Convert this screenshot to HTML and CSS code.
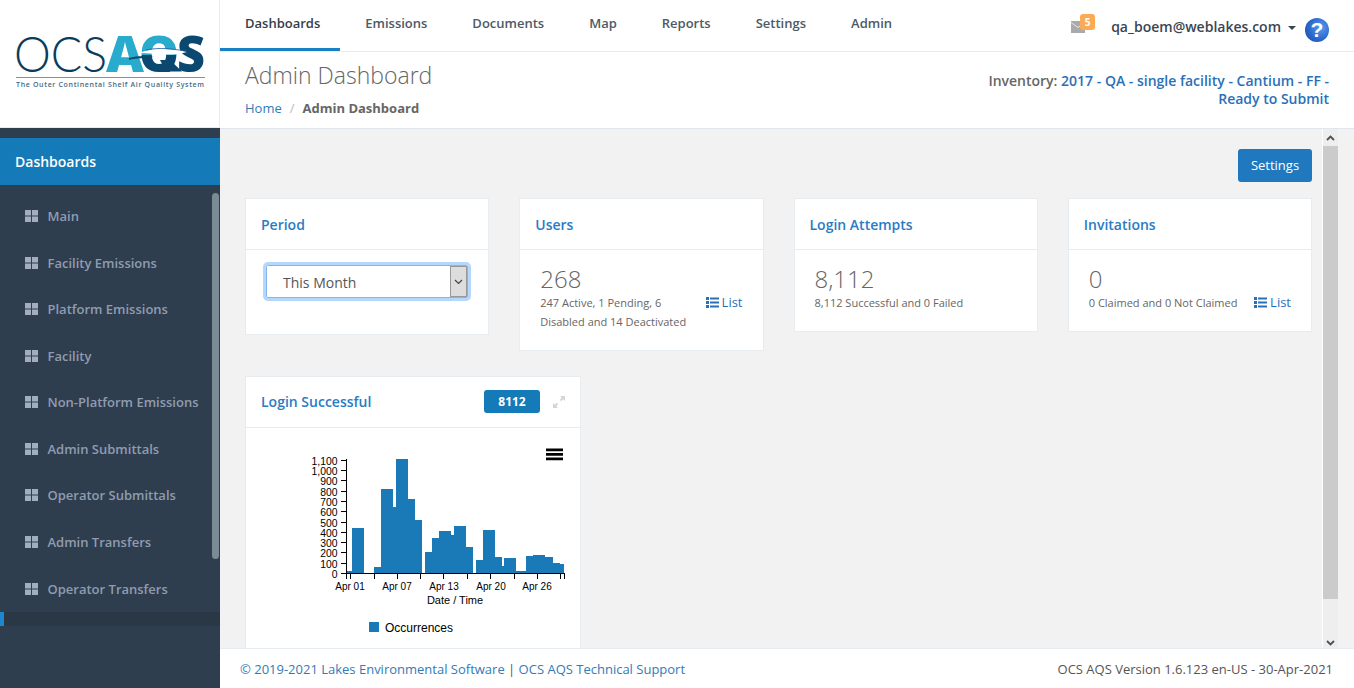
FILE: index.html
```html
<!DOCTYPE html>
<html>
<head>
	<title>OCS AQS - Admin Dashboard</title>
	<meta charset="utf-8">
	<link rel="stylesheet" href="styles.css">
</head>
<body>
<div class="page">
	<aside class="sidebar">
		<div class="logo">
			<svg width="219" height="127" viewBox="0 0 219 127">
				<defs>
					<linearGradient id="qfill" gradientUnits="userSpaceOnUse" x1="0" y1="0" x2="0" y2="127">
						<stop offset="0.43" stop-color="#29abce"/>
						<stop offset="0.43" stop-color="#0a4870"/>
					</linearGradient>
					<clipPath id="qcut"><rect x="130" y="20" width="60" height="52"/></clipPath>
				</defs>
				<text x="14" y="71.500" class="logo-thin" textLength="93" lengthAdjust="spacingAndGlyphs">OCS</text>
				<text x="106" y="71.500" class="logo-bold logo-a" textLength="38" lengthAdjust="spacingAndGlyphs">A</text>
				<text x="139" y="71.500" class="logo-bold logo-q" textLength="40" lengthAdjust="spacingAndGlyphs" clip-path="url(#qcut)">Q</text>
				<text x="177" y="71.500" class="logo-bold logo-s" textLength="28" lengthAdjust="spacingAndGlyphs">S</text>
				<path d="M139 53C150 49 165 47 187 52C170 57 155 53 139 53Z" fill="#fff"/>
				<path d="M146 50C160 47 172 49 186 51" fill="none" stroke="#1c5f9c" stroke-width="0.800"/>
				<path d="M129 58C136 56 145 55 154 57C146 58 136 58 129 60Z" fill="#0a4870"/>
				<path d="M160 60H170L182 71.500H166Z" fill="#0a4870"/>
				<path d="M16 77.500H205" class="logo-line"/>
				<text x="16" y="87" class="logo-tag" textLength="188">The Outer Continental Shelf Air Quality System</text>
			</svg>
		</div>
		<div class="side-gap"></div>
		<div class="side-head">Dashboards</div>
		<ul class="side-menu">
			<li><svg class="grid-icon" viewBox="0 0 13 12"><path d="M0 0h6v5.500h-6zM7 0h6v5.500h-6zM0 6.500h6v5.500h-6zM7 6.500h6v5.500h-6z"/></svg>Main</li>
			<li><svg class="grid-icon" viewBox="0 0 13 12"><path d="M0 0h6v5.500h-6zM7 0h6v5.500h-6zM0 6.500h6v5.500h-6zM7 6.500h6v5.500h-6z"/></svg>Facility Emissions</li>
			<li><svg class="grid-icon" viewBox="0 0 13 12"><path d="M0 0h6v5.500h-6zM7 0h6v5.500h-6zM0 6.500h6v5.500h-6zM7 6.500h6v5.500h-6z"/></svg>Platform Emissions</li>
			<li><svg class="grid-icon" viewBox="0 0 13 12"><path d="M0 0h6v5.500h-6zM7 0h6v5.500h-6zM0 6.500h6v5.500h-6zM7 6.500h6v5.500h-6z"/></svg>Facility</li>
			<li><svg class="grid-icon" viewBox="0 0 13 12"><path d="M0 0h6v5.500h-6zM7 0h6v5.500h-6zM0 6.500h6v5.500h-6zM7 6.500h6v5.500h-6z"/></svg>Non-Platform Emissions</li>
			<li><svg class="grid-icon" viewBox="0 0 13 12"><path d="M0 0h6v5.500h-6zM7 0h6v5.500h-6zM0 6.500h6v5.500h-6zM7 6.500h6v5.500h-6z"/></svg>Admin Submittals</li>
			<li><svg class="grid-icon" viewBox="0 0 13 12"><path d="M0 0h6v5.500h-6zM7 0h6v5.500h-6zM0 6.500h6v5.500h-6zM7 6.500h6v5.500h-6z"/></svg>Operator Submittals</li>
			<li><svg class="grid-icon" viewBox="0 0 13 12"><path d="M0 0h6v5.500h-6zM7 0h6v5.500h-6zM0 6.500h6v5.500h-6zM7 6.500h6v5.500h-6z"/></svg>Admin Transfers</li>
			<li><svg class="grid-icon" viewBox="0 0 13 12"><path d="M0 0h6v5.500h-6zM7 0h6v5.500h-6zM0 6.500h6v5.500h-6zM7 6.500h6v5.500h-6z"/></svg>Operator Transfers</li>
		</ul>
		<div class="side-active"></div>
		<div class="side-thumb"></div>
	</aside>

	<div class="main">
		<header class="topbar">
			<nav class="tabs">
				<a class="tab active">Dashboards</a>
				<a class="tab">Emissions</a>
				<a class="tab">Documents</a>
				<a class="tab">Map</a>
				<a class="tab">Reports</a>
				<a class="tab">Settings</a>
				<a class="tab">Admin</a>
			</nav>
			<div class="user-area">
				<div class="mail">
					<svg width="14" height="12" viewBox="0 0 14 12"><path d="M0 0h14v12h-14z" fill="#aaa"/><path d="M0 1.500l7 5 7-5" fill="none" stroke="#e4e4e4" stroke-width="1"/></svg>
					<span class="mail-badge">5</span>
				</div>
				<span class="user-name">qa_boem@weblakes.com</span>
				<span class="caret"></span>
				<span class="help">?</span>
			</div>
		</header>

		<div class="page-head">
			<div>
				<h1>Admin Dashboard</h1>
				<div class="crumbs"><a>Home</a><span class="sep">/</span><b>Admin Dashboard</b></div>
			</div>
			<div class="inventory">Inventory: <a>2017 - QA - single facility - Cantium - FF - Ready to Submit</a></div>
		</div>

		<div class="content">
			<div class="scroll-area">
				<div class="actions"><button class="btn">Settings</button></div>
				<div class="cards">
					<section class="card">
						<div class="card-head">Period</div>
						<div class="period-body">
							<div class="fake-select">
								<span class="select-text">This Month</span>
								<span class="select-arrow"><svg width="9" height="6" viewBox="0 0 9 6"><path d="M1 1l3.500 3.500 3.500-3.500" fill="none" stroke="#444" stroke-width="1.200"/></svg></span>
							</div>
						</div>
					</section>
					<section class="card">
						<div class="card-head">Users</div>
						<div class="card-body">
							<div class="big-num">268</div>
							<div class="stat-row">
								<p class="stat-text">247 Active, 1 Pending, 6 Disabled and 14 Deactivated</p>
								<a class="list-link"><svg class="list-icon" viewBox="0 0 13 11"><path d="M0 0h3v3h-3zM0 4h3v3h-3zM0 8h3v3h-3zM4 .500h9v2h-9zM4 4.500h9v2h-9zM4 8.500h9v2h-9z"/></svg>List</a>
							</div>
						</div>
					</section>
					<section class="card">
						<div class="card-head">Login Attempts</div>
						<div class="card-body">
							<div class="big-num">8,112</div>
							<div class="stat-row">
								<p class="stat-text wide">8,112 Successful and 0 Failed</p>
							</div>
						</div>
					</section>
					<section class="card">
						<div class="card-head">Invitations</div>
						<div class="card-body">
							<div class="big-num">0</div>
							<div class="stat-row">
								<p class="stat-text">0 Claimed and 0 Not Claimed</p>
								<a class="list-link"><svg class="list-icon" viewBox="0 0 13 11"><path d="M0 0h3v3h-3zM0 4h3v3h-3zM0 8h3v3h-3zM4 .500h9v2h-9zM4 4.500h9v2h-9zM4 8.500h9v2h-9z"/></svg>List</a>
							</div>
						</div>
					</section>
				</div>

				<section class="card chart-card">
					<div class="card-head chart-head">
						<span>Login Successful</span>
						<span class="chart-tools">
							<span class="count">8112</span>
							<svg width="12" height="12" viewBox="0 0 12 12"><path d="M7 0h5v5l-1.800-1.800-2 2-1.400-1.400 2-2zM5 12h-5v-5l1.800 1.800 2-2 1.400 1.400-2 2z" fill="#d5d5d5"/></svg>
						</span>
					</div>
					<svg class="chart" width="334" height="240" viewBox="246 428 334 240">
						<g fill="#1a7ab8">
							<rect x="347" y="571" width="5" height="2"/>
							<rect x="352" y="528" width="12" height="45"/>
							<rect x="374" y="567" width="7" height="6"/>
							<rect x="381" y="489" width="12" height="84"/>
							<rect x="393" y="507" width="3" height="66"/>
							<rect x="396" y="459" width="12" height="114"/>
							<rect x="408" y="499" width="7" height="74"/>
							<rect x="415" y="520" width="7" height="53"/>
							<rect x="425" y="552" width="7" height="21"/>
							<rect x="432" y="538" width="7" height="35"/>
							<rect x="439" y="531" width="12" height="42"/>
							<rect x="451" y="535" width="3" height="38"/>
							<rect x="454" y="526" width="12" height="47"/>
							<rect x="466" y="547" width="7" height="26"/>
							<rect x="476" y="560" width="7" height="13"/>
							<rect x="483" y="530" width="12" height="43"/>
							<rect x="495" y="557" width="7" height="16"/>
							<rect x="502" y="566" width="2" height="7"/>
							<rect x="504" y="558" width="12" height="15"/>
							<rect x="516" y="571" width="10" height="2"/>
							<rect x="526" y="556" width="7" height="17"/>
							<rect x="533" y="555" width="12" height="18"/>
							<rect x="545" y="557" width="8" height="16"/>
							<rect x="553" y="563" width="7" height="10"/>
							<rect x="560" y="564" width="4" height="9"/>
						</g>
						<path class="axis" d="M346.500 459V579M346 573.500H564M341 460.500h5M341 470.500h5M341 480.500h5M341 491.500h5M341 501.500h5M341 511.500h5M341 522.500h5M341 532.500h5M341 542.500h5M341 552.500h5M341 563.500h5M341 573.500h5M350.500 573V579M374.500 573V579M397.500 573V579M420.500 573V579M443.500 573V579M467.500 573V579M490.500 573V579M514.500 573V579M537.500 573V579M560.500 573V579M564.500 573V579"/>
						<g class="y-labels">
							<text x="337.500" y="465">1,100</text>
							<text x="337.500" y="475">1,000</text>
							<text x="337.500" y="485">900</text>
							<text x="337.500" y="496">800</text>
							<text x="337.500" y="506">700</text>
							<text x="337.500" y="516">600</text>
							<text x="337.500" y="527">500</text>
							<text x="337.500" y="537">400</text>
							<text x="337.500" y="547">300</text>
							<text x="337.500" y="557">200</text>
							<text x="337.500" y="568">100</text>
							<text x="337.500" y="578">0</text>
						</g>
						<g class="x-labels">
							<text x="350" y="590">Apr 01</text>
							<text x="397" y="590">Apr 07</text>
							<text x="444" y="590">Apr 13</text>
							<text x="491" y="590">Apr 20</text>
							<text x="537" y="590">Apr 26</text>
							<text x="455" y="604" class="x-title">Date / Time</text>
						</g>
						<rect x="369" y="622" width="10" height="10" fill="#1a7ab8"/>
						<text x="385" y="632" class="legend">Occurrences</text>
						<path d="M546 448.500h17v2.800h-17zM546 453h17v2.800h-17zM546 457.500h17v2.800h-17z" fill="#000"/>
					</svg>
				</section>
			</div>
			<div class="scrollbar">
				<span class="sb-btn"><svg width="9" height="6" viewBox="0 0 9 6"><path d="M1 5l3.500-3.500 3.500 3.500" fill="none" stroke="#505050" stroke-width="1.800"/></svg></span>
				<span class="sb-thumb"></span>
				<span class="sb-track"></span>
				<span class="sb-btn sb-down"><svg width="9" height="6" viewBox="0 0 9 6"><path d="M1 1l3.500 3.500 3.500-3.500" fill="none" stroke="#505050" stroke-width="1.800"/></svg></span>
			</div>
		</div>

		<footer class="footer">
			<div><a>&copy; 2019-2021 Lakes Environmental Software</a> | <a>OCS AQS Technical Support</a></div>
			<div class="version">OCS AQS Version 1.6.123 en-US - 30-Apr-2021</div>
		</footer>
	</div>
</div>
</body>
</html>
```

FILE: styles.css
```css
* {
	box-sizing: border-box;
}
html, body {
	height: 100%;
	margin: 0;
	overflow: hidden;
}
body {
	font-family: "Open Sans", "Liberation Sans", sans-serif;
	font-size: 13px;
	color: #333;
	background-color: #fff;
}
a {
	color: #2a70b8;
	text-decoration: none;
}
.page {
	display: grid;
	grid-template-columns: 220px 1fr;
	height: 100vh;
}

/* sidebar */
.sidebar {
	position: relative;
	background-color: #2f3e4f;
	overflow: hidden;
}
.logo {
	height: 128px;
	background-color: #fff;
	border-right: 1px solid #e7ecf1;
	border-bottom: 1px solid #e7ecf1;
}
.logo svg {
	display: block;
}
.logo-thin {
	font-family: "Lato", sans-serif;
	font-weight: 300;
	font-size: 49px;
	fill: #0c3c5c;
}
.logo-bold {
	font-family: "Open Sans", sans-serif;
	font-weight: 800;
	font-size: 49px;
}
.logo-a {
	fill: #29abce;
}
.logo-q {
	fill: url(#qfill);
}
.logo-s {
	fill: #0a4870;
}
.logo-line {
	stroke: #7d93a6;
	stroke-width: 1;
}
.logo-tag {
	font-family: "Open Sans", sans-serif;
	font-weight: 600;
	font-size: 7px;
	fill: #456a85;
}
.side-gap {
	height: 10px;
}
.side-head {
	height: 47px;
	padding-left: 15px;
	line-height: 47px;
	font-size: 14px;
	font-weight: 600;
	color: #fff;
	background-color: #147ab8;
}
.side-menu {
	margin: 0;
	padding: 7.900px 0 0;
	list-style: none;
}
.side-menu li {
	display: flex;
	align-items: center;
	height: 46.550px;
	padding-left: 25px;
	font-weight: 600;
	color: #8f9cb0;
}
.grid-icon {
	width: 13px;
	height: 12px;
	margin-right: 9.500px;
	fill: #a2adbd;
}
.side-active {
	height: 14px;
	border-left: 4px solid #1e88cf;
	background-color: #2a3744;
}
.side-thumb {
	position: absolute;
	top: 193px;
	left: 212px;
	width: 7px;
	height: 366px;
	border-radius: 4px;
	background-color: #7b8b96;
}

/* top bar */
.main {
	display: flex;
	flex-direction: column;
	min-width: 0;
	height: 100vh;
}
.topbar {
	display: flex;
	justify-content: space-between;
	height: 52px;
	border-bottom: 1px solid #e7ecf1;
}
.tabs {
	display: flex;
}
.tab {
	height: 51px;
	padding: 14px 20px 0 25px;
	font-weight: 600;
	color: #4e5966;
}
.tab.active {
	color: #333e4a;
	border-bottom: 3px solid #1b7fc3;
}
.user-area {
	display: flex;
	align-items: center;
	padding-right: 25px;
}
.mail {
	position: relative;
	display: flex;
	margin-top: 3px;
	margin-right: 26px;
}
.mail-badge {
	position: absolute;
	top: -7px;
	left: 9px;
	width: 15px;
	height: 16px;
	border-radius: 3px;
	font-size: 10px;
	font-weight: 700;
	line-height: 16px;
	text-align: center;
	color: #fff;
	background-color: #fbab55;
}
.user-name {
	padding-top: 2px;
	font-size: 14px;
	font-weight: 600;
	color: #3a4552;
}
.caret {
	width: 0;
	height: 0;
	margin: 5px 9px 0 7px;
	border-top: 4px solid #3a4552;
	border-left: 4px solid transparent;
	border-right: 4px solid transparent;
}
.help {
	width: 24px;
	height: 24px;
	margin-top: 8px;
	border-radius: 50%;
	font-family: "Liberation Sans", sans-serif;
	font-size: 21px;
	font-weight: 700;
	line-height: 24px;
	text-align: center;
	color: #fff;
	background: radial-gradient(circle at 65% 40%, #5b9cf0 0%, #2a67cc 55%, #1a4aa5 100%);
}

/* page head */
.page-head {
	display: flex;
	justify-content: space-between;
	height: 77px;
	padding: 0 25px;
	border-bottom: 1px solid #e1e5ec;
}
h1 {
	margin: 7px 0 0;
	font-size: 23px;
	font-weight: 300;
	line-height: 33px;
	color: #666;
}
.crumbs {
	margin-top: 7px;
	color: #666;
}
.crumbs a {
	color: #337ab7;
}
.crumbs b {
	font-weight: 700;
}
.sep {
	margin: 0 8px;
	color: #bbb;
}
.inventory {
	width: 345px;
	margin-top: 20px;
	font-size: 14px;
	font-weight: 600;
	line-height: 18px;
	text-align: right;
	color: #666;
}

/* content */
.content {
	display: flex;
	flex: 1;
	min-height: 0;
	padding-right: 16px;
	background-color: #f2f2f2;
}
.scroll-area {
	flex: 1;
	min-width: 0;
	padding: 20px 10px 0 25px;
	overflow: hidden;
}
.actions {
	display: flex;
	justify-content: flex-end;
	margin-bottom: 16px;
}
.btn {
	width: 74px;
	height: 33px;
	padding: 0 0 2px;
	border: 0;
	border-radius: 3px;
	font-family: inherit;
	font-size: 13px;
	color: #fff;
	background-color: #2079bf;
}
.cards {
	display: grid;
	grid-template-columns: repeat(4, 1fr);
	grid-template-rows: 153px;
	gap: 30px;
	align-items: start;
	margin-bottom: 25px;
}
.card {
	background-color: #fff;
	border: 1px solid #e7ecf1;
}
.card-head {
	height: 51px;
	padding-left: 15px;
	line-height: 51px;
	font-size: 14px;
	font-weight: 600;
	color: #2a7bc4;
	border-bottom: 1px solid #e7ecf1;
}
.period-body {
	height: 84px;
	padding: 15px 20px 0;
}
.fake-select {
	display: flex;
	height: 33px;
	border: 1px solid #80b5f0;
	border-radius: 2px;
	box-shadow: 0 0 0 3px #b5d7fb;
	color: #555;
}
.select-text {
	flex: 1;
	padding-left: 16px;
	font-size: 14px;
	line-height: 33px;
	background-color: #fff;
}
.select-arrow {
	display: flex;
	align-items: center;
	justify-content: center;
	width: 17px;
	background-color: #ddd;
	border: 1px solid #999;
}
.card-body {
	padding: 14px 20px 19px;
}
.big-num {
	font-size: 24px;
	font-weight: 300;
	line-height: 29px;
	color: #666;
}
.stat-row {
	display: flex;
	justify-content: space-between;
	align-items: flex-start;
}
.stat-text {
	width: 152px;
	margin: 0;
	font-size: 11px;
	line-height: 19px;
	color: #666;
}
.stat-text.wide {
	width: auto;
}
.list-link {
	display: flex;
	align-items: center;
	height: 18px;
}
.list-icon {
	width: 13px;
	height: 11px;
	margin-right: 3px;
	fill: #2a70b8;
}
.chart-card {
	width: 336px;
}
.chart-head {
	display: flex;
	justify-content: space-between;
	align-items: center;
	padding-right: 15px;
	padding-bottom: 1px;
}
.chart-tools {
	display: flex;
	align-items: center;
	gap: 13px;
}
.count {
	width: 56px;
	height: 23px;
	border-radius: 3px;
	font-size: 12px;
	font-weight: 700;
	line-height: 23px;
	text-align: center;
	color: #fff;
	background-color: #147ab8;
}
.chart {
	display: block;
}
.axis {
	fill: none;
	stroke: #000;
	stroke-width: 1;
}
.y-labels text, .x-labels text, .legend {
	font-family: "Liberation Sans", sans-serif;
	fill: #000;
}
.y-labels text {
	font-size: 10.400px;
	text-anchor: end;
}
.x-labels text {
	font-size: 10px;
	text-anchor: middle;
}
.x-labels .x-title {
	font-size: 11px;
}
.legend {
	font-size: 12px;
}

/* fake page scrollbar */
.scrollbar {
	display: flex;
	flex-direction: column;
	width: 16px;
	border-left: 1px solid #fff;
	background-color: #eee;
}
.sb-btn {
	display: flex;
	align-items: center;
	justify-content: center;
	height: 17px;
}
.sb-down {
	align-items: flex-end;
	padding-bottom: 2px;
}
.sb-thumb {
	height: 453px;
	background-color: #cbcbcb;
}
.sb-track {
	flex: 1;
}

/* footer */
.footer {
	display: flex;
	justify-content: space-between;
	align-items: center;
	height: 40px;
	padding: 0 21px 0 20px;
	font-size: 13px;
	color: #555;
	border-top: 1px solid #e7ecf1;
}
.footer a {
	color: #337ab7;
}
```
